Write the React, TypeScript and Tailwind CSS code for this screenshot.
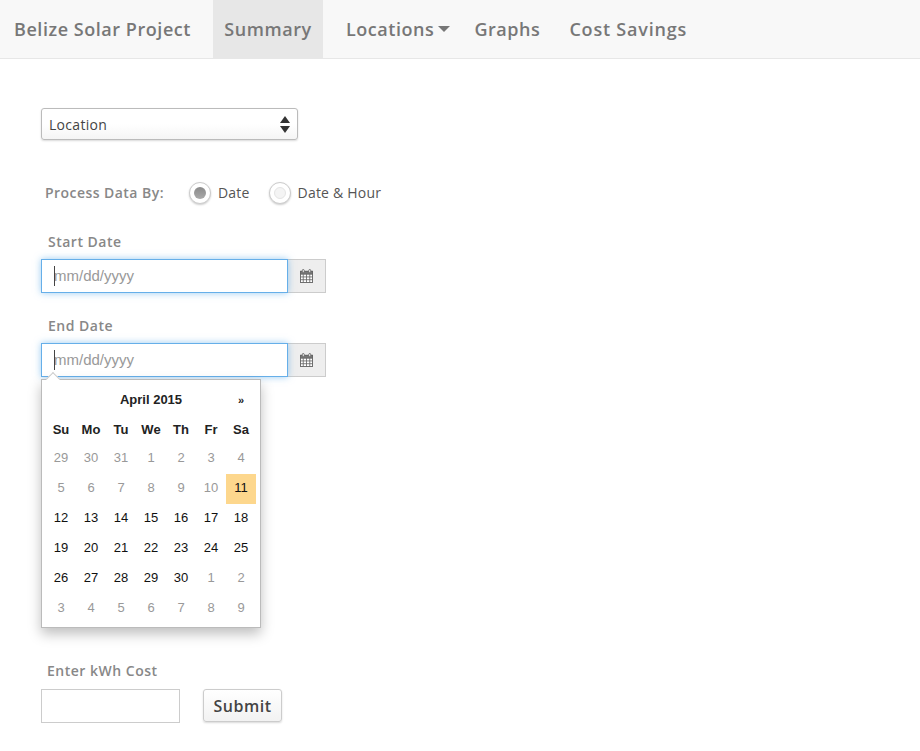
import React from 'react';

const lucida = "font-['Open_Sans','Noto_Sans',sans-serif]";
const helvetica = "font-['Liberation_Sans',Arial,sans-serif]";

const weeks = [
  ['29', '30', '31', '1', '2', '3', '4'],
  ['5', '6', '7', '8', '9', '10', '11'],
  ['12', '13', '14', '15', '16', '17', '18'],
  ['19', '20', '21', '22', '23', '24', '25'],
  ['26', '27', '28', '29', '30', '1', '2'],
  ['3', '4', '5', '6', '7', '8', '9'],
];

// days from the 11th up to the 30th are selectable, the rest are greyed out
const isCurrent = (row: number, col: number) =>
  row === 2 || row === 3 || (row === 4 && col < 5) || (row === 1 && col === 6);

const CalendarIcon = () => (
  <svg width="13" height="14" viewBox="0 0 14 15" fill="none" stroke="#666" strokeWidth="1">
    <rect x="0.5" y="2.5" width="13" height="12" fill="#fff" />
    <rect x="0.5" y="2.5" width="13" height="3" fill="#777" />
    <path d="M0.5 8.5H13.5M0.5 11.5H13.5M3.5 5.5V14.5M7 5.5V14.5M10.5 5.5V14.5" strokeWidth="0.9" />
    <rect x="2.5" y="0.5" width="2" height="3.5" rx="1" fill="#fff" />
    <rect x="9.5" y="0.5" width="2" height="3.5" rx="1" fill="#fff" />
  </svg>
);

const DateField = ({ label }: { label: string }) => (
  <div>
    <label className={`${lucida} block pl-[7px] text-[14px] leading-[18px] font-semibold tracking-[0.5px] text-[#888]`}>
      {label}
    </label>
    <div className="mt-2 flex h-[34px] w-[285px]">
      <div className="relative w-[247px] border border-[#66afe9] bg-white shadow-[0_0_7px_rgba(102,175,233,0.65)]">
        <input
          placeholder="mm/dd/yyyy"
          className={`${helvetica} h-full w-full pb-[2px] pl-3 text-[15px] outline-none placeholder:text-[#999]`}
        />
        <span className="absolute top-[6px] left-3 h-5 w-px bg-[#444]" />
      </div>
      <div className="flex w-[38px] items-center justify-center border border-l-0 border-[#ccc] bg-[#eee]">
        <CalendarIcon />
      </div>
    </div>
  </div>
);

const Radio = ({ label, on }: { label: string; on?: boolean }) => (
  <div className="flex items-center gap-[7px]">
    <span className="flex h-[22px] w-[22px] items-center justify-center rounded-full border border-[#ccc] bg-white shadow-[0_1px_2px_rgba(0,0,0,0.2)]">
      <span
        className={
          on
            ? 'h-3 w-3 rounded-full bg-gradient-to-b from-[#8a8a8a] to-[#aaa]'
            : 'h-3 w-3 rounded-full border border-[#e4e4e4] bg-[#f4f4f4]'
        }
      />
    </span>
    <span className={`${lucida} pb-[2px] text-[14px] tracking-[0.2px] text-[#555]`}>{label}</span>
  </div>
);

const DatePicker = () => (
  <div className={`${helvetica} absolute top-[36px] left-0 z-10 h-[249px] w-[220px] border border-[#bbb] bg-white px-[4px] pt-[4px] shadow-[0_6px_12px_rgba(0,0,0,0.25)]`}>
    {/* little arrow up to the input */}
    <span className="absolute -top-[6px] left-[6px] h-[10px] w-[10px] rotate-45 border-t border-l border-[#ccc] bg-white" />
    <div className="grid h-[30px] grid-cols-7 items-center pt-[2px] text-center text-[13px] font-bold text-[#222]">
      <span className="col-span-5 col-start-2">April 2015</span>
      <span className="text-[11px]">»</span>
    </div>
    <div className="grid h-[30px] grid-cols-7 items-center pt-[2px] text-center text-[13px] font-bold text-[#222]">
      {['Su', 'Mo', 'Tu', 'We', 'Th', 'Fr', 'Sa'].map((d) => (
        <span key={d}>{d}</span>
      ))}
    </div>
    {weeks.map((week, row) => (
      <div key={row} className="grid h-[30px] grid-cols-7 text-center text-[13px]">
        {week.map((day, col) => (
          <span
            key={col}
            className={`flex h-[30px] items-center justify-center pb-[2px] ${isCurrent(row, col) ? 'text-[#111]' : 'text-[#999]'} ${
              day === '11' ? 'bg-[#fdd78d]' : ''
            }`}
          >
            {day}
          </span>
        ))}
      </div>
    ))}
  </div>
);

export default function App() {
  return (
    <div className="h-[751px] w-[920px] overflow-hidden bg-white">
      {/* Navbar */}
      <nav className={`${lucida} flex h-[59px] items-stretch border-b border-[#e7e7e7] bg-[#f8f8f8] text-[18px] font-semibold tracking-[0.55px] text-[#777]`}>
        <a className="ml-[14px] flex items-center">Belize Solar Project</a>
        <a className="ml-[22px] flex w-[110px] items-center justify-center bg-[#e7e7e7]">Summary</a>
        <a className="ml-[23px] flex items-center">
          Locations
          <svg width="12" height="6" viewBox="0 0 12 6" className="ml-[4px]" fill="#777">
            <path d="M0 0H12L6 6Z" />
          </svg>
        </a>
        <a className="ml-[24px] flex items-center">Graphs</a>
        <a className="ml-[29px] flex items-center tracking-[0.8px]">Cost Savings</a>
      </nav>

      <main className="pt-[49px] pl-[41px]">
        {/* Location select */}
        <div className={`${lucida} flex h-8 w-[257px] items-center justify-between rounded-[3px] border border-[#bbb] bg-gradient-to-b from-white from-50% to-[#f5f5f5] pr-[7px] pl-[7px] text-[14px] tracking-[0.3px] text-[#444] shadow-[0_1px_2px_rgba(0,0,0,0.15)]`}>
          Location
          <svg width="10" height="17" viewBox="0 0 10 17" fill="#333" className="mt-[1px]">
            <path d="M5 0L10 7H0Z" />
            <path d="M5 17L10 10H0Z" />
          </svg>
        </div>

        {/* Process by */}
        <div className="mt-[41px] flex h-[24px] items-center pl-[4px]">
          <span className={`${lucida} w-[144px] pb-[2px] text-[14px] font-semibold tracking-[0.45px] text-[#888]`}>
            Process Data By:
          </span>
          <div className="flex gap-[19px]">
            <Radio label="Date" on />
            <Radio label="Date & Hour" />
          </div>
        </div>

        <div className="mt-[28px] flex flex-col gap-[24px]">
          <DateField label="Start Date" />
          <div className="relative">
            <div>
              <DateField label="End Date" />
            </div>
            <div className="absolute top-[26px] left-0 h-0 w-0">
              <DatePicker />
            </div>
          </div>
        </div>

        {/* kWh cost */}
        <div className="mt-[285px]">
          <label className={`${lucida} block pl-[6px] text-[14px] leading-[18px] font-semibold tracking-[0.5px] text-[#888]`}>
            Enter kWh Cost
          </label>
          <div className="mt-[9px] flex gap-[23px]">
            <input className="h-[34px] w-[139px] border border-[#ccc] bg-white outline-none" />
            <button className={`${lucida} h-[33px] w-[79px] rounded-[3px] border border-[#ccc] bg-gradient-to-b from-white to-[#f2f2f2] text-[16px] font-semibold tracking-[0.5px] text-[#444] shadow-[0_1px_2px_rgba(0,0,0,0.15)]`}>
              Submit
            </button>
          </div>
        </div>
      </main>
    </div>
  );
}
